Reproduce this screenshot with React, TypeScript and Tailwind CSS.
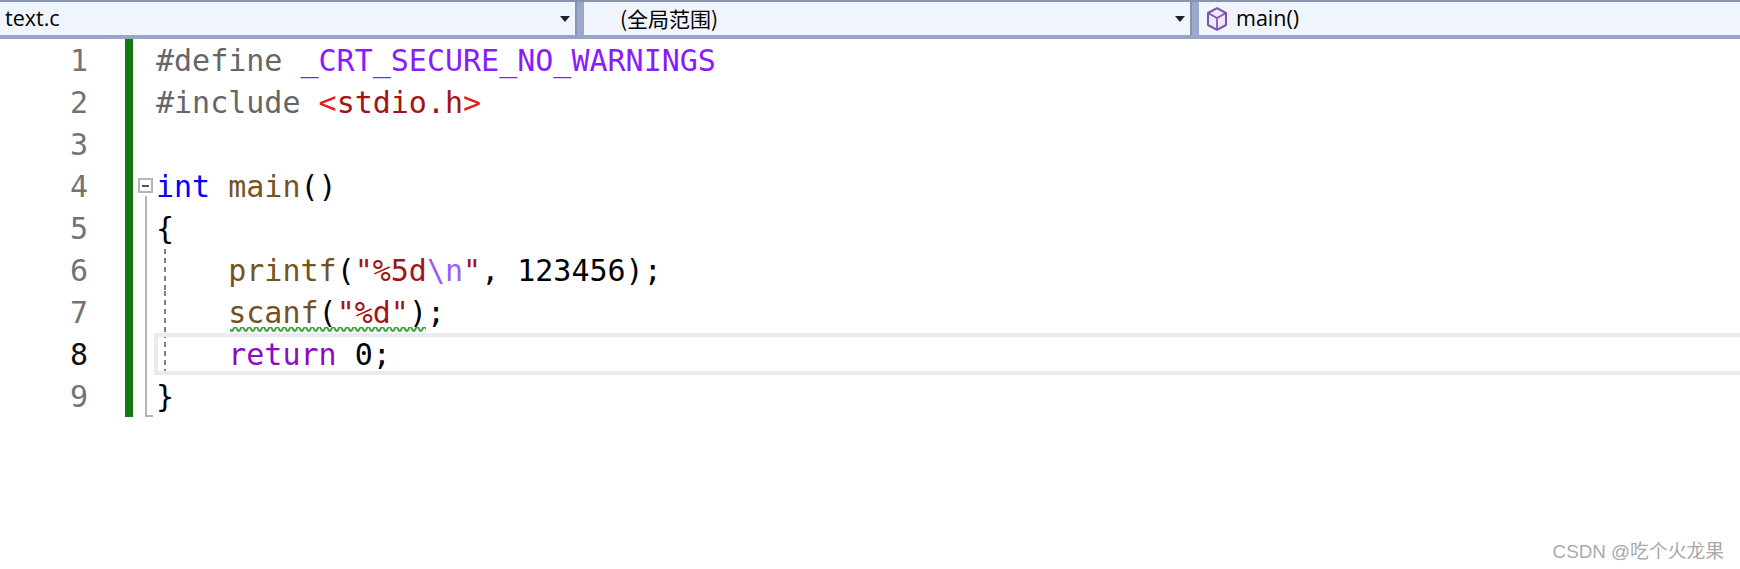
const mono = "font-['DejaVu_Sans_Mono','Liberation_Mono',monospace]";

const kw = "text-[#0000ff]";
const fn = "text-[#74531f]";
const str = "text-[#a31515]";
const pre = "text-[#666666]";
const esc = "text-[#9e5bff]";
const ret = "text-[#8f08c4]";
const mac = "text-[#8a1bff]";
const ang = "text-[#e21f1f]";

function Caret() {
  return <span className="ml-auto mr-[3px] h-0 w-0 border-x-[5px] border-t-[6px] border-x-transparent border-t-[#222]" />;
}

function Cube() {
  return (
    <svg width="20" height="24" viewBox="0 0 20 24" fill="none" className="shrink-0">
      <path d="M10 1.2 L19 6 V18 L10 22.8 L1 18 V6 Z" fill="#efe9f7" stroke="#7a52b3" strokeWidth="2" strokeLinejoin="round" />
      <path d="M1 6 L10 11 L19 6 M10 11 V22.8" stroke="#7a52b3" strokeWidth="1.7" />
    </svg>
  );
}

function Toolbar() {
  return (
    <div className="flex h-[39px] gap-[7px] bg-[#9aa9c9] border-t-2 border-t-[#8893ad] border-b-[4px] border-b-[#97a6c6] text-[21.5px] text-[#000] font-['Open_Sans','Noto_Sans_CJK_SC',sans-serif]">
      <div className="flex w-[577px] items-center bg-[#f0f4fc] pl-[5px] pr-[2px] border-r-2 border-[#8893ad]">
        <span>text.c</span>
        <Caret />
      </div>
      <div className="flex w-[608px] items-center bg-[#f0f4fc] pl-[36px] pr-[2px] border-r-2 border-[#8893ad]">
        <span className="font-['Noto_Sans_CJK_SC',sans-serif] text-[21px]">(全局范围)</span>
        <Caret />
      </div>
      <div className="flex flex-1 items-center gap-[9px] bg-[#f0f4fc] pl-[8px]">
        <Cube />
        <span>main()</span>
      </div>
    </div>
  );
}

type Line = { n: number; code: React.ReactNode };

const lines: Line[] = [
  { n: 1, code: <><span className={pre}>#define</span> <span className={mac}>_CRT_SECURE_NO_WARNINGS</span></> },
  { n: 2, code: <><span className={pre}>#include</span> <span className={ang}>&lt;</span><span className={str}>stdio.h</span><span className={ang}>&gt;</span></> },
  { n: 3, code: "" },
  { n: 4, code: <><span className={kw}>int</span> <span className={fn}>main</span>()</> },
  { n: 5, code: "{" },
  { n: 6, code: <>    <span className={fn}>printf</span>(<span className={str}>"%5d</span><span className={esc}>\n</span><span className={str}>"</span>, 123456);</> },
  { n: 7, code: <>    <span className={fn}>scanf</span>(<span className={str}>"%d"</span>);</> },
  { n: 8, code: <>    <span className={ret}>return</span> 0;</> },
  { n: 9, code: "}" },
];

function Row({ line }: { line: Line }) {
  const current = line.n === 8;
  return (
    <div className="relative flex h-[42px] items-center">
      <div className={`w-[88px] shrink-0 text-right ${current ? "text-[#111]" : "text-[#737373]"}`}>{line.n}</div>
      <div className="ml-[37px] h-full w-[8px] shrink-0 bg-[#107c10]" />
      <div className="relative h-full w-[23px] shrink-0">
        {line.n === 4 && (
          <div className="absolute left-[5px] top-[13px] flex h-[15px] w-[15px] items-center justify-center border-2 border-[#b5b5b5] bg-white">
            <span className="h-[2px] w-[7px] bg-[#555]" />
          </div>
        )}
        {line.n > 4 && <div className="absolute left-[12px] top-0 bottom-0 w-[2px] bg-[#b5b5b5]" />}
        {line.n === 4 && <div className="absolute left-[12px] top-[31px] bottom-0 w-[2px] bg-[#b5b5b5]" />}
        {line.n === 9 && <div className="absolute left-[12px] bottom-0 h-[2px] w-[8px] bg-[#b5b5b5]" />}
      </div>
      <pre className={`relative top-[1px] text-[30px] leading-[42px] text-[#000] ${mono}`}>{line.code}</pre>
      {line.n >= 6 && line.n <= 8 && (
        <div className="absolute left-[164px] top-0 bottom-0 w-[2px] bg-[repeating-linear-gradient(to_bottom,#808080_0,#808080_5px,transparent_5px,transparent_9px)]" />
      )}
      {current && <div className="absolute left-[154px] right-0 top-0 h-[42px] border-[4px] border-r-0 border-[#eaeaf2]" />}
      {line.n === 7 && (
        <svg className="absolute left-[230px] top-[36px]" width="196" height="7" viewBox="0 0 196 7">
          <path
            d={"M0 2" + Array.from({ length: 56 }, (_, i) => ` q1.75 ${i % 2 ? -4 : 4} 3.5 0`).join("")}
            fill="none"
            stroke="#3aa63a"
            strokeWidth="2"
          />
        </svg>
      )}
    </div>
  );
}

export default function App() {
  return (
    <div className={`relative h-[569px] w-[1740px] overflow-hidden bg-white ${mono} text-[30px]`}>
      <Toolbar />
      <div>
        {lines.map((l) => (
          <Row key={l.n} line={l} />
        ))}
      </div>
      <div className="absolute right-[16px] bottom-[3px] text-[18.8px] text-[#aaaaaa] font-['Liberation_Sans','Noto_Sans_CJK_SC',sans-serif]">
        CSDN @吃个火龙果
      </div>
    </div>
  );
}
